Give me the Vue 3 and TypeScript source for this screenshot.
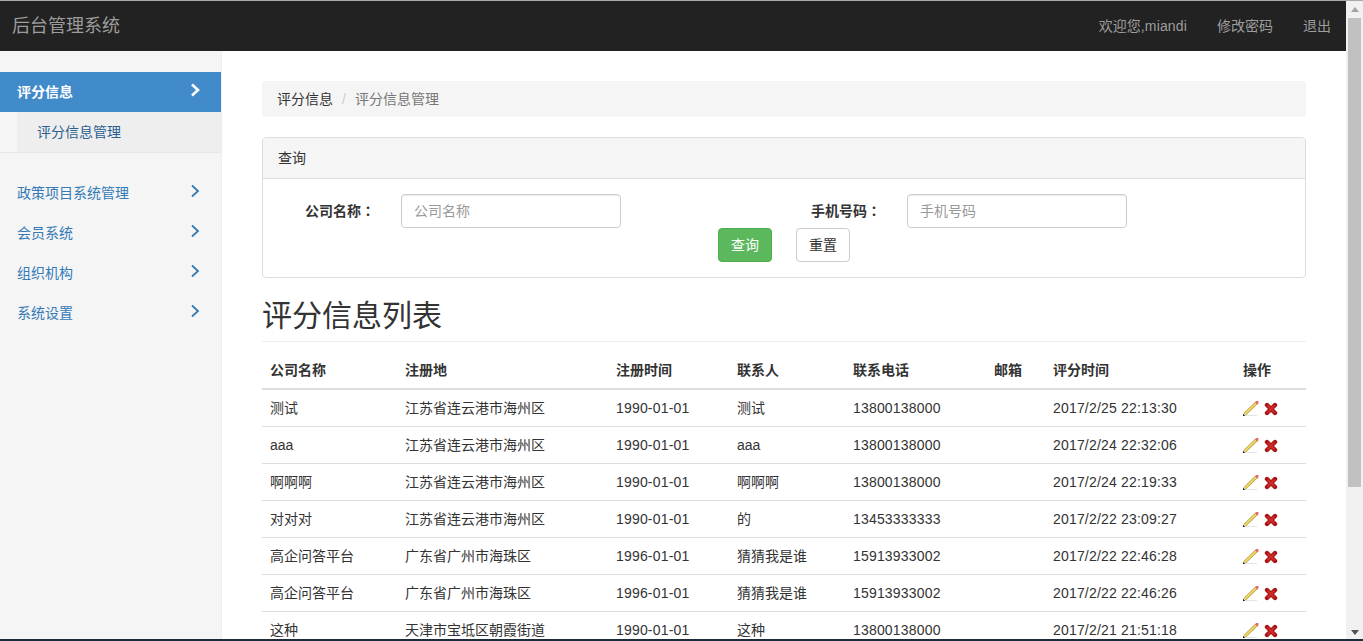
<script setup lang="ts">
const MENU = ['政策项目系统管理', '会员系统', '组织机构', '系统设置']

const COLUMNS = [
  { label: '公司名称', width: 135 },
  { label: '注册地', width: 211 },
  { label: '注册时间', width: 121 },
  { label: '联系人', width: 116 },
  { label: '联系电话', width: 141 },
  { label: '邮箱', width: 59 },
  { label: '评分时间', width: 190 },
  { label: '操作', width: 71 },
]

const ROWS = [
  ['测试', '江苏省连云港市海州区', '1990-01-01', '测试', '13800138000', '', '2017/2/25 22:13:30'],
  ['aaa', '江苏省连云港市海州区', '1990-01-01', 'aaa', '13800138000', '', '2017/2/24 22:32:06'],
  ['啊啊啊', '江苏省连云港市海州区', '1990-01-01', '啊啊啊', '13800138000', '', '2017/2/24 22:19:33'],
  ['对对对', '江苏省连云港市海州区', '1990-01-01', '的', '13453333333', '', '2017/2/22 23:09:27'],
  ['高企问答平台', '广东省广州市海珠区', '1996-01-01', '猜猜我是谁', '15913933002', '', '2017/2/22 22:46:28'],
  ['高企问答平台', '广东省广州市海珠区', '1996-01-01', '猜猜我是谁', '15913933002', '', '2017/2/22 22:46:26'],
  ['这种', '天津市宝坻区朝霞街道', '1990-01-01', '这种', '13800138000', '', '2017/2/21 21:51:18'],
]

// date and phone columns
const NUMERIC = [2, 4, 6]
</script>

<template>
  <div class="app">
    <div class="page">
      <header class="navbar">
        <span class="brand">后台管理系统</span>
        <nav class="nav-links">
          <a>欢迎您<span class="latin">,miandi</span></a>
          <a>修改密码</a>
          <a>退出</a>
        </nav>
      </header>

      <div class="body">
        <aside class="sidebar">
          <div class="menu-item menu-item--active">
            <span>评分信息</span>
            <svg class="chevron" viewBox="0 0 12 14"><path d="M3 1.5 9 7l-6 5.5" /></svg>
          </div>
          <div class="submenu"><span>评分信息管理</span></div>
          <div class="menu-list">
            <div v-for="m in MENU" :key="m" class="menu-item">
              <span>{{ m }}</span>
              <svg class="chevron" viewBox="0 0 12 14"><path d="M3 1.5 9 7l-6 5.5" /></svg>
            </div>
          </div>
        </aside>

        <main class="content">
          <div class="breadcrumb">
            <span class="crumb">评分信息</span>
            <span class="sep">/</span>
            <span class="crumb-current">评分信息管理</span>
          </div>

          <section class="panel">
            <div class="panel-heading">查询</div>
            <div class="panel-body">
              <div class="form-row">
                <div class="form-group">
                  <label>公司名称<span class="colon">：</span></label>
                  <input type="text" placeholder="公司名称" />
                </div>
                <div class="form-group">
                  <label>手机号码<span class="colon">：</span></label>
                  <input type="text" placeholder="手机号码" />
                </div>
              </div>
              <div class="form-actions">
                <button class="btn btn-success">查询</button>
                <button class="btn">重置</button>
              </div>
            </div>
          </section>

          <h1 class="page-header">评分信息列表</h1>

          <table class="table">
            <colgroup>
              <col v-for="c in COLUMNS" :key="c.label" :style="{ width: c.width + 'px' }" />
            </colgroup>
            <thead>
              <tr>
                <th v-for="c in COLUMNS" :key="c.label">{{ c.label }}</th>
              </tr>
            </thead>
            <tbody>
              <tr v-for="(row, i) in ROWS" :key="i">
                <td v-for="(cell, j) in row" :key="j" :class="{ num: NUMERIC.includes(j) }">{{ cell }}</td>
                <td class="actions">
                  <svg class="icon" viewBox="0 0 16 16">
                    <path d="M3 15.5h11" stroke="#e4e4e4" stroke-width="1" />
                    <path d="M1.6 14.4 13.4 2.8" stroke="#b89c34" stroke-width="3.2" />
                    <path d="M1.8 14.2 13.2 3" stroke="#f3de72" stroke-width="1.7" />
                    <path d="M13.2 1h2.2v2.4L14.4 4.6 12 2.2z" fill="#e8646a" />
                    <path d="M0 16v-2.2L2.2 16z" fill="#111" />
                  </svg>
                  <svg class="icon icon-x" viewBox="0 0 14 14">
                    <path d="M3 3l8 8M11 3l-8 8" stroke="#a81414" stroke-width="4.4" stroke-linecap="round" />
                    <path d="M3.5 3.5l7 7M10.5 3.5l-7 7" stroke="#cf2a2a" stroke-width="2" />
                  </svg>
                </td>
              </tr>
            </tbody>
          </table>
        </main>
      </div>
    </div>

    <div class="scrollbar">
      <span class="arrow arrow-up"></span>
      <div class="thumb-track"><div class="thumb"></div></div>
      <span class="arrow arrow-down"></span>
    </div>

    <div class="bottom-edge"></div>
  </div>
</template>

<style scoped>
.app {
  position: relative;
  display: flex;
  width: 1363px;
  height: 641px;
  box-sizing: border-box;
  border-top: 1px solid #a9a9a9;
  overflow: hidden;
  font-family: "Liberation Sans", "Noto Sans CJK SC", sans-serif;
  font-size: 14px;
  line-height: 20px;
  color: #333;
  background: #fff;
}

.page {
  flex: 1;
  min-width: 0;
  height: 640px;
  overflow: hidden;
}

.navbar {
  display: flex;
  align-items: center;
  justify-content: space-between;
  height: 50px;
  background: #222;
  color: #9d9d9d;
}

.brand {
  padding-left: 12px;
  font-size: 18px;
}

.nav-links {
  display: flex;
}
.nav-links a {
  padding: 0 15px;
}
.latin {
  letter-spacing: 0.15px;
}

.body {
  display: flex;
}

.sidebar {
  flex: none;
  width: 221px;
  height: 590px;
  padding-top: 21px;
  box-sizing: content-box;
  background: #f5f5f5;
  border-right: 1px solid #eee;
}

.menu-item {
  display: flex;
  align-items: center;
  justify-content: space-between;
  height: 40px;
  padding: 0 20px 0 17px;
  color: #337ab7;
}
.menu-item--active {
  background: #428bca;
  color: #fff;
  font-weight: 700;
}

.chevron {
  width: 12px;
  height: 14px;
  margin-top: -5px;
  fill: none;
  stroke: currentColor;
  stroke-width: 1.8;
}
.menu-item--active .chevron {
  stroke-width: 2.6;
}

.submenu {
  height: 41px;
  padding-left: 17px;
  border-bottom: 1px solid #e7e7e7;
  box-sizing: border-box;
}
.submenu span {
  display: block;
  height: 40px;
  padding-left: 20px;
  line-height: 40px;
  background: #eee;
  color: #2a5f8f;
}

.menu-list {
  padding-top: 20px;
}

.content {
  flex: 1;
  min-width: 0;
  padding: 30px 40px 0;
}

.breadcrumb {
  height: 36px;
  box-sizing: border-box;
  padding: 8px 15px;
  margin-bottom: 20px;
  background: #f5f5f5;
  border-radius: 4px;
}
.sep {
  padding: 0 9px;
  color: #ccc;
}
.crumb-current {
  color: #777;
}

.panel {
  border: 1px solid #ddd;
  border-radius: 4px;
}
.panel-heading {
  height: 41px;
  box-sizing: border-box;
  padding: 10px 15px;
  background: #f5f5f5;
  border-bottom: 1px solid #ddd;
  border-radius: 3px 3px 0 0;
}
.panel-body {
  padding: 15px 0;
}

.form-row {
  display: grid;
  grid-template-columns: repeat(2, 506px);
  padding-left: 42px;
}
.form-group {
  display: flex;
  align-items: center;
}
.form-group label {
  width: 96px;
  font-weight: 700;
}
.colon {
  font-family: "Noto Sans CJK TC", sans-serif;
  line-height: 0;
}
.form-group input {
  width: 220px;
  height: 34px;
  box-sizing: border-box;
  padding: 6px 12px;
  font: inherit;
  color: #555;
  background: #fff;
  border: 1px solid #ccc;
  border-radius: 4px;
  box-shadow: inset 0 1px 1px rgba(0, 0, 0, 0.075);
}
.form-group input::placeholder {
  color: #999;
  opacity: 1;
}

.form-actions {
  display: flex;
  justify-content: center;
  gap: 24px;
}

.btn {
  width: 54px;
  height: 34px;
  padding: 0;
  font: inherit;
  color: #333;
  background: #fff;
  border: 1px solid #ccc;
  border-radius: 4px;
}
.btn-success {
  color: #fff;
  background: #5cb85c;
  border-color: #4cae4c;
}

.page-header {
  margin: 21px 0 10px;
  padding-bottom: 9px;
  font-size: 30px;
  font-weight: 400;
  line-height: 33px;
  border-bottom: 1px solid #eee;
}

.table {
  width: 100%;
  table-layout: fixed;
  border-collapse: collapse;
  border-spacing: 0;
}
.table th {
  padding: 8px;
  text-align: left;
  font-weight: 700;
  border-bottom: 2px solid #ddd;
}
.table td {
  height: 20px;
  padding: 8px;
  border-bottom: 1px solid #ddd;
  white-space: nowrap;
}
.table td.num {
  letter-spacing: 0.18px;
}
.table td.actions {
  padding-top: 4px;
  padding-bottom: 0;
  vertical-align: top;
}

.icon {
  display: inline-block;
  width: 16px;
  height: 16px;
  margin-top: 6px;
  vertical-align: top;
}
.icon-x {
  width: 14px;
  height: 14px;
  margin-top: 8px;
  margin-left: 5px;
}

.scrollbar {
  flex: none;
  display: flex;
  flex-direction: column;
  align-items: center;
  width: 17px;
  height: 640px;
  background: #f1f1f1;
}
.arrow {
  flex: none;
  width: 0;
  height: 0;
  border-left: 4px solid transparent;
  border-right: 4px solid transparent;
}
.arrow-up {
  margin: 6px 0 5px;
  border-bottom: 5px solid #a3a3a3;
}
.arrow-down {
  margin: 0 0 6px;
  border-top: 5px solid #505050;
}
.thumb-track {
  flex: 1;
  width: 100%;
  padding: 1px 2px 0;
  box-sizing: border-box;
}
.thumb {
  height: 469px;
  background: #c1c1c1;
}

.bottom-edge {
  position: absolute;
  left: 0;
  right: 0;
  bottom: 0;
  height: 2px;
  background: #1e2b38;
}
</style>
